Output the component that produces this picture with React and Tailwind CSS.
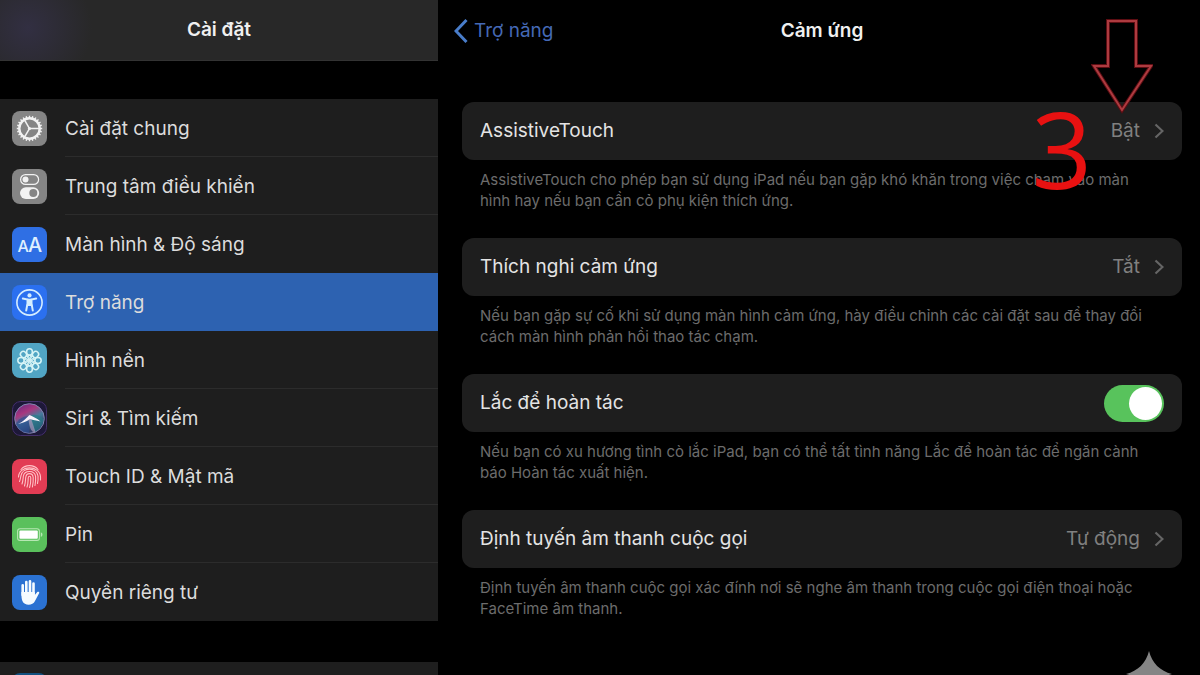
import { useState } from 'react'

function Tile({ className, children }) {
  return (
    <span className={`flex size-[35px] shrink-0 items-center justify-center overflow-hidden rounded-lg ${className}`}>
      <svg viewBox="0 0 35 35" className="size-full" fill="none" aria-hidden="true">
        {children}
      </svg>
    </span>
  )
}

const spin = (count) => Array.from({ length: count }, (_, i) => (360 / count) * i)

function GearIcon() {
  return (
    <Tile className="bg-[#858585]">
      <circle cx="17.5" cy="17.5" r="10.2" stroke="#f2f2f2" strokeWidth="2.4" />
      {spin(24).map((a) => (
        <path key={a} d="M17.5 7V4.8" stroke="#f2f2f2" strokeWidth="1.4" transform={`rotate(${a} 17.5 17.5)`} />
      ))}
      {[90, 210, 330].map((a) => (
        <path key={a} d="M17.5 17.5V8" stroke="#f2f2f2" strokeWidth="1.5" transform={`rotate(${a} 17.5 17.5)`} />
      ))}
      <circle cx="17.5" cy="17.5" r="1.6" fill="#f2f2f2" />
    </Tile>
  )
}

function ControlIcon() {
  return (
    <Tile className="bg-[#858585]">
      <rect x="8.6" y="5.6" width="18" height="9.8" rx="4.9" stroke="#f2f2f2" strokeWidth="1.2" />
      <circle cx="13.5" cy="10.5" r="3" fill="#f2f2f2" />
      <rect x="8" y="18.2" width="19.2" height="11.8" rx="5.9" fill="#f2f2f2" />
      <circle cx="21.3" cy="24.1" r="4" fill="#858585" />
    </Tile>
  )
}

function DisplayIcon() {
  return (
    <Tile className="bg-[#2f6fe4]">
      <text x="5.5" y="25" fontSize="16" fontWeight="500" fill="#dff0ff" fontFamily="Inter, sans-serif">A</text>
      <text x="16" y="25" fontSize="20" fontWeight="500" fill="#dff0ff" fontFamily="Inter, sans-serif">A</text>
    </Tile>
  )
}

function AccessibilityIcon() {
  return (
    <Tile className="bg-[#2b70f0]">
      <circle cx="17.5" cy="17.5" r="12.6" stroke="#d5edff" strokeWidth="1.6" />
      <circle cx="17.5" cy="10.4" r="2.1" fill="#d5edff" />
      <path d="M10.8 13.6 15.5 14.5V18.5L14.2 25.6M24.2 13.6 19.5 14.5V18.5L20.8 25.6" stroke="#d5edff" strokeWidth="2" strokeLinecap="round" />
      <path d="M15 13.8H20V18.5L20.4 21H14.6L15 18.5Z" fill="#d5edff" />
    </Tile>
  )
}

function WallpaperIcon() {
  return (
    <Tile className="bg-[#51a5c4]">
      {spin(8).map((a) => (
        <g key={a} stroke="#d6f4f6" transform={`rotate(${a} 17.5 17.5)`}>
          <ellipse cx="17.5" cy="9" rx="2.9" ry="3.2" strokeWidth="1.5" />
          <circle cx="17.5" cy="14" r="2" strokeWidth="1" />
        </g>
      ))}
      <circle cx="17.5" cy="17.5" r="1.4" fill="#d6f4f6" />
    </Tile>
  )
}

function SiriIcon() {
  return (
    <Tile className="bg-[#1d1838]">
      <defs>
        <linearGradient id="siri-orb" x1="0.2" y1="0" x2="0.7" y2="1">
          <stop offset="0" stopColor="#6e2880" />
          <stop offset="0.3" stopColor="#a8387f" />
          <stop offset="0.55" stopColor="#467c9c" />
          <stop offset="1" stopColor="#242558" />
        </linearGradient>
      </defs>
      <rect x="0.5" y="0.5" width="34" height="34" rx="8" stroke="#45306a" />
      <circle cx="17.5" cy="17.5" r="14.8" fill="url(#siri-orb)" stroke="#8386b0" strokeWidth="1" />
      <path d="M17.5 15C11 15 6 18 4 23C6 29 11 32 17 32Z" fill="#2a4a90" opacity="0.6" />
      <path d="M18 15C24 12 29 15 31.5 19C30 26 26 30 22 31Z" fill="#277e88" opacity="0.65" />
      <path d="M18 14 23.5 31C21 32 18 30 16.5 19Z" fill="#b19fc0" opacity="0.65" />
      <path d="M6 23C11 21 14 17 17.5 14C21 16 25 17 28.5 20.5C24 19.5 21 19 18 18C14 21 10 22 6 23Z" fill="#f6f2fb" />
    </Tile>
  )
}

function TouchIdIcon() {
  return (
    <Tile className="bg-[#e23c54]">
      <g stroke="#ffc2c6" strokeWidth="1.1" strokeLinecap="round">
        <path d="M9 10.5C13 5.3 22 5.3 26 10.5" />
        <path d="M6.5 18C7 5.8 28 5.8 28.5 18V21" />
        <path d="M7.5 22.5C8.5 20 8.5 18.5 8.9 17C10.2 7.8 24.8 7.8 26 17C26.2 20 26 23 25.5 24.5" />
        <path d="M10 25C11 22 11 20 11.3 17.5C12.3 10.8 22.7 10.8 23.6 17.5C23.8 21 23.5 24 23 26.5" />
        <path d="M12.5 27C13.5 24 13.5 21 13.7 18.5C14.3 13.3 20.7 13.3 21.2 18.5C21.4 22 21 25 20.4 28" />
        <path d="M15 28C16.2 25 16.1 22 16.2 19C16.4 16.7 18.7 16.7 18.8 19C18.9 23 18.6 25.5 17.6 28.5" />
      </g>
    </Tile>
  )
}

function BatteryIcon() {
  return (
    <Tile className="bg-[#5ac05c]">
      <rect x="5.6" y="11.8" width="21.8" height="11.6" rx="2.4" stroke="#b6e7b3" strokeWidth="1.1" />
      <rect x="7.4" y="13.4" width="18.4" height="8.4" rx="1" fill="#fff" />
      <path d="M28.8 15.3C31 16.2 31 19 28.8 19.9Z" fill="#b6e7b3" />
    </Tile>
  )
}

function PrivacyIcon() {
  return (
    <Tile className="bg-[#2b72d2]">
      <g stroke="#f5fbff" strokeWidth="2.6" strokeLinecap="round">
        <path d="M10.7 10.3V20M14.3 7V18M18 6.2V18M21.5 8.5V20" />
      </g>
      <path d="M9.4 17H22.8V20L25.3 17.1C26.3 16.2 27.8 17 27.1 18.3L23 26C20.7 31 12.5 31 10.4 26C9.5 23.7 9.4 21 9.4 17Z" fill="#f5fbff" />
    </Tile>
  )
}

const menu = [
  { label: 'Cài đặt chung', Icon: GearIcon },
  { label: 'Trung tâm điều khiển', Icon: ControlIcon },
  { label: 'Màn hình & Độ sáng', Icon: DisplayIcon },
  { label: 'Trợ năng', Icon: AccessibilityIcon, active: true },
  { label: 'Hình nền', Icon: WallpaperIcon },
  { label: 'Siri & Tìm kiếm', Icon: SiriIcon },
  { label: 'Touch ID & Mật mã', Icon: TouchIdIcon },
  { label: 'Pin', Icon: BatteryIcon },
  { label: 'Quyền riêng tư', Icon: PrivacyIcon },
]

function MenuRow({ label, Icon, active, divided }) {
  return (
    <li className={active ? 'bg-[#2d62b1]' : ''}>
      <a href="#" aria-current={active ? 'page' : undefined} className="flex h-[58px] items-center gap-[18px] pl-3">
        <Icon />
        <span className={`flex h-full flex-1 items-center border-b pt-[2px] ${divided ? 'border-[#2c2c2c]' : 'border-transparent'}`}>
          {label}
        </span>
      </a>
    </li>
  )
}

function Sidebar() {
  return (
    <aside className="flex w-[36.5%] shrink-0 flex-col">
      <header className="flex h-[61px] shrink-0 items-center justify-center border-b border-[#333] bg-radial-[circle_at_28px_28px] from-[#322f42] to-[#282828] to-[64px]">
        <h1 className="font-semibold text-[#f0f0f0]">Cài đặt</h1>
      </header>
      <nav className="mt-[38px] shrink-0 bg-[#1e1e1e] text-[#dcdcdc]">
        <ul>
          {menu.map((item, i) => (
            <MenuRow
              key={item.label}
              {...item}
              divided={i < menu.length - 1 && !item.active && !menu[i + 1].active}
            />
          ))}
        </ul>
      </nav>
      <div className="mt-[41px] flex-1 shrink-0 bg-[#1e1e1e] pt-[11px] pl-3">
        <span className="block size-[35px] rounded-lg bg-[#12507f]" />
      </div>
    </aside>
  )
}

function Chevron() {
  return (
    <svg viewBox="0 0 10 16" className="h-4 w-[10px]" fill="none" aria-hidden="true">
      <path d="M1.5 1.5 8.5 8 1.5 14.5" stroke="#656565" strokeWidth="2.2" />
    </svg>
  )
}

const card = 'flex h-[58px] w-full items-center justify-between rounded-xl bg-[#1e1e1e] px-[18px] text-left text-[#e4e4e4]'

function Setting({ note, children }) {
  return (
    <section>
      {children}
      <p className="min-h-[78px] pt-[9px] pr-7 pl-[18px] text-[15px] leading-[21px] text-[#6c6c6c]">{note}</p>
    </section>
  )
}

function LinkSetting({ label, value, note }) {
  return (
    <Setting note={note}>
      <button type="button" className={card}>
        <span>{label}</span>
        <span className="flex items-center gap-[14px] text-[#808080]">
          {value}
          <Chevron />
        </span>
      </button>
    </Setting>
  )
}

function ToggleSetting({ label, note }) {
  const [on, setOn] = useState(true)
  return (
    <Setting note={note}>
      <label className={card}>
        <span>{label}</span>
        <input type="checkbox" role="switch" checked={on} onChange={(e) => setOn(e.target.checked)} className="peer sr-only" />
        <span className="flex h-[37px] w-[60px] rounded-full bg-[#3a3a3c] p-[2px] peer-checked:justify-end peer-checked:bg-[#58c35c]">
          <span className="size-[33px] rounded-full bg-white" />
        </span>
      </label>
    </Setting>
  )
}

function Marker() {
  return (
    <div className="pointer-events-none absolute top-[18px] right-[27px] h-44 w-[140px]">
      <svg viewBox="0 0 62 96" className="absolute top-0 right-5 h-24 w-[62px]" fill="none" aria-hidden="true">
        <path d="M17 3H45V48H60L31 92 3 48H17Z" stroke="#5c0d12" strokeWidth="4" />
        <path d="M17 3H45V48H60L31 92 3 48H17Z" stroke="#ad3b40" strokeWidth="2" />
      </svg>
      <span className="absolute right-[81px] bottom-0 font-['Open_Sans',sans-serif] text-[106px] leading-[92px] text-[#e81111]">3</span>
    </div>
  )
}

function App() {
  return (
    <div className="relative flex h-screen overflow-hidden bg-black font-[Inter,sans-serif] text-[19px] leading-6">
      <Sidebar />
      <main className="flex min-w-0 flex-1 flex-col pr-[18px] pl-6">
        <header className="grid h-[62px] shrink-0 grid-cols-[1fr_auto_1fr] items-center">
          <a href="#" className="-ml-2 flex items-center gap-[6px] text-[#4569b5]">
            <svg viewBox="0 0 14 26" className="h-[26px] w-[14px]" fill="none" aria-hidden="true">
              <path d="M12.5 2 2 13 12.5 24" stroke="#497dca" strokeWidth="3" />
            </svg>
            Trợ năng
          </a>
          <h2 className="font-semibold text-[#f0f0f0]">Cảm ứng</h2>
        </header>
        <div className="pt-10">
          <LinkSetting
            label="AssistiveTouch"
            value="Bật"
            note="AssistiveTouch cho phép bạn sử dụng iPad nếu bạn gặp khó khăn trong việc chạm vào màn hình hay nếu bạn cần cỏ phụ kiện thích ứng."
          />
          <LinkSetting
            label="Thích nghi cảm ứng"
            value="Tắt"
            note="Nếu bạn gặp sự cố khi sử dụng màn hình cảm ứng, hày điều chỉnh các cài đặt sau để thay đổi cách màn hình phản hồi thao tác chạm."
          />
          <ToggleSetting
            label="Lắc để hoàn tác"
            note="Nếu bạn có xu hương tình cò lắc iPad, bạn có thể tất tình năng Lắc để hoàn tác để ngăn cành báo Hoàn tác xuất hiện."
          />
          <LinkSetting
            label="Định tuyến âm thanh cuộc gọi"
            value="Tự động"
            note="Định tuyến âm thanh cuộc gọi xác đính nơi sẽ nghe âm thanh trong cuộc gọi điện thoại hoặc FaceTime âm thanh."
          />
        </div>
      </main>
      <Marker />
      <svg viewBox="0 0 46 46" className="absolute right-7 -bottom-[22px] size-[46px]" aria-hidden="true">
        <path d="M23 0C26 12 34 20 46 23C34 26 26 34 23 46C20 34 12 26 0 23C12 20 20 12 23 0Z" fill="#858585" />
      </svg>
    </div>
  )
}

export default App
